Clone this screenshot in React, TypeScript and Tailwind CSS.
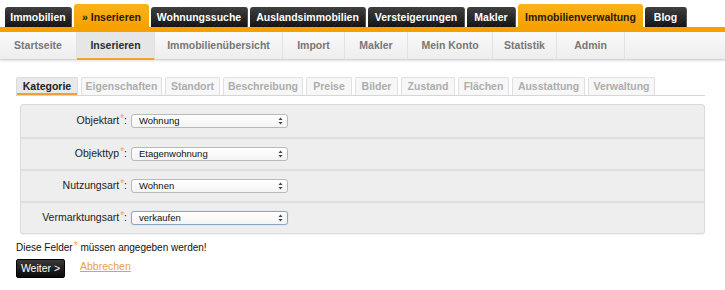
import React from "react";

const topTabs: { label: string; w: string; active?: boolean }[] = [
  { label: "Immobilien", w: "w-[67px]" },
  { label: "» Inserieren", w: "w-[75px]", active: true },
  { label: "Wohnungssuche", w: "w-[97px]" },
  { label: "Auslandsimmobilien", w: "w-[116px]" },
  { label: "Versteigerungen", w: "w-[97px]" },
  { label: "Makler", w: "w-[49px]" },
  { label: "Immobilienverwaltung", w: "w-[125px]", active: true },
  { label: "Blog", w: "w-[42px]" },
];

const subNav: { label: string; w: string; active?: boolean }[] = [
  { label: "Startseite", w: "w-[77px]" },
  { label: "Inserieren", w: "w-[78px]", active: true },
  { label: "Immobilienübersicht", w: "w-[128px]" },
  { label: "Import", w: "w-[62px]" },
  { label: "Makler", w: "w-[63px]" },
  { label: "Mein Konto", w: "w-[85px]" },
  { label: "Statistik", w: "w-[64px]" },
  { label: "Admin", w: "w-[68px]" },
];

const stepTabs: { label: string; w: string; active?: boolean }[] = [
  { label: "Kategorie", w: "w-[62px]", active: true },
  { label: "Eigenschaften", w: "w-[81px]" },
  { label: "Standort", w: "w-[55px]" },
  { label: "Beschreibung", w: "w-[80px]" },
  { label: "Preise", w: "w-[46px]" },
  { label: "Bilder", w: "w-[43px]" },
  { label: "Zustand", w: "w-[54px]" },
  { label: "Flächen", w: "w-[51px]" },
  { label: "Ausstattung", w: "w-[73px]" },
  { label: "Verwaltung", w: "w-[67px]" },
];

const rows: { label: string; value: string; focus?: boolean }[] = [
  { label: "Objektart", value: "Wohnung" },
  { label: "Objekttyp", value: "Etagenwohnung" },
  { label: "Nutzungsart", value: "Wohnen" },
  { label: "Vermarktungsart", value: "verkaufen", focus: true },
];

function Arrows() {
  return (
    <svg width="5" height="8" viewBox="0 0 5 8" className="shrink-0">
      <path d="M2.5 0.5 L4.5 3 L0.5 3 Z" fill="#444" />
      <path d="M2.5 7.5 L4.5 5 L0.5 5 Z" fill="#444" />
    </svg>
  );
}

function Star() {
  return (
    <span className="text-[#f0a050] text-[10px] relative -top-[2px] ml-[1px]">*</span>
  );
}

export default function App() {
  return (
    <div className="w-[725px] h-[290px] bg-white overflow-hidden font-['Liberation_Sans',Arial,sans-serif]">
      {/* Top navigation */}
      <div className="h-[27px] flex items-end pl-[5px] gap-[2px]">
        {topTabs.map((t) =>
          t.active ? (
            <div
              key={t.label}
              className={`${t.w} h-[23px] rounded-t-[3px] bg-gradient-to-b from-[#fbb319] to-[#f7a100] flex justify-center pt-[6px] text-[10.5px] font-bold text-[#2a1a00]`}
            >
              {t.label}
            </div>
          ) : (
            <div
              key={t.label}
              className={`${t.w} h-[20px] rounded-t-[3px] bg-[repeating-linear-gradient(135deg,rgba(255,255,255,0.04)_0px,rgba(255,255,255,0.04)_1px,transparent_1px,transparent_3px),linear-gradient(to_bottom,#3d3d3d,#121212)] border-r border-[#555] flex justify-center pt-[3px] text-[10.5px] font-bold text-white`}
            >
              {t.label}
            </div>
          )
        )}
      </div>
      <div className="h-[5px] bg-[#f7a100]" />

      {/* Sub navigation */}
      <div className="h-[28px] flex bg-gradient-to-b from-[#fafafa] to-[#ededed] border-b border-[#d4d4d4] shadow-[0_1px_2px_rgba(0,0,0,0.12)]">
        {subNav.map((s) => (
          <div
            key={s.label}
            className={`${s.w} relative flex items-center justify-center text-[10.5px] font-bold border-r border-[#e2e2e2] ${
              s.active ? "bg-[#e6e6e6] text-[#2b2b2b]" : "text-[#777]"
            }`}
          >
            {s.label}
            {s.active && (
              <div className="absolute left-0 right-0 bottom-[-1px] h-[2px] bg-[#f0a030]" />
            )}
          </div>
        ))}
      </div>

      {/* Step tabs */}
      <div className="mt-[17px] ml-[16px] w-[689px] h-[19px] flex items-end gap-[3px] border-b border-[#d6d6d6]">
        {stepTabs.map((s) => (
          <div
            key={s.label}
            className={`${s.w} h-[18px] rounded-t-[2px] border border-b-0 flex items-center justify-center text-[10.5px] font-bold ${
              s.active
                ? "bg-[#e9e9e9] border-[#dcdcdc] text-[#222] shadow-[inset_0_-2px_0_#f0a030]"
                : "bg-[#f7f7f7] border-[#e0e0e0] text-[#adadad]"
            }`}
          >
            {s.label}
          </div>
        ))}
      </div>

      {/* Form panel */}
      <div className="mt-[8px] ml-[20px] w-[685px] bg-[#eeeeee] border border-[#dadada] rounded-[3px] shadow-[0_1px_1px_rgba(0,0,0,0.06)]">
        {rows.map((r, i) => (
          <div
            key={r.label}
            className={`h-[32px] flex items-center ${i > 0 ? "border-t-2 border-[#dedede]" : ""}`}
          >
            <div className="w-[107px] text-right text-[10.5px] text-[#222] pr-[1px]">
              {r.label}
              <Star />:
            </div>
            <div
              className={`ml-[3px] w-[157px] h-[14px] rounded-[3px] bg-gradient-to-b from-white to-[#f4f4f4] flex items-center justify-between pl-[7px] pr-[4px] text-[9.5px] text-[#111] ${
                r.focus
                  ? "border border-[#8aa6c8] shadow-[0_0_1px_#9ab]"
                  : "border border-[#b9b9b9]"
              }`}
            >
              <span className="leading-none">{r.value}</span>
              <Arrows />
            </div>
          </div>
        ))}
      </div>

      {/* Footer */}
      <div className="ml-[16px] mt-[6px] text-[10px] text-[#111]">
        Diese Felder
        <Star /> müssen angegeben werden!
      </div>
      <div className="ml-[16px] mt-[4px] flex items-center gap-[15px]">
        <button className="w-[49px] h-[19px] rounded-[2px] bg-gradient-to-b from-[#3a3a3a] to-[#0a0a0a] border border-[#000] text-white text-[10.5px] flex items-center justify-center">
          Weiter &gt;
        </button>
        <a className="text-[10.5px] text-[#e9a13a] underline underline-offset-1 -mt-[3px] cursor-pointer">
          Abbrechen
        </a>
      </div>
    </div>
  );
}
